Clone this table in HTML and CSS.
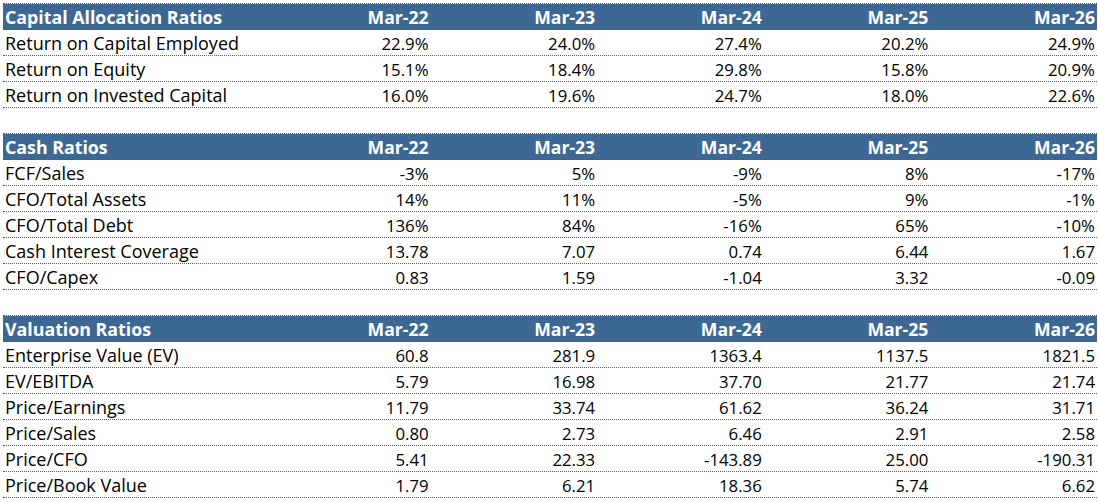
FILE: index.html
```html
<!DOCTYPE html>
<html lang="en">
<head>
<meta charset="utf-8">
<title>Ratios</title>
<link rel="stylesheet" href="styles.css">
</head>
<body>
<div class="sheet">
  <div class="row head"><div class="lbl">Capital Allocation Ratios</div><div>Mar-22</div><div>Mar-23</div><div>Mar-24</div><div>Mar-25</div><div>Mar-26</div></div>
  <div class="row"><div class="lbl">Return on Capital Employed</div><div>22.9%</div><div>24.0%</div><div>27.4%</div><div>20.2%</div><div>24.9%</div></div>
  <div class="row"><div class="lbl">Return on Equity</div><div>15.1%</div><div>18.4%</div><div>29.8%</div><div>15.8%</div><div>20.9%</div></div>
  <div class="row"><div class="lbl">Return on Invested Capital</div><div>16.0%</div><div>19.6%</div><div>24.7%</div><div>18.0%</div><div>22.6%</div></div>
  <div class="row blank"></div>
  <div class="row head"><div class="lbl">Cash Ratios</div><div>Mar-22</div><div>Mar-23</div><div>Mar-24</div><div>Mar-25</div><div>Mar-26</div></div>
  <div class="row"><div class="lbl">FCF/Sales</div><div>-3%</div><div>5%</div><div>-9%</div><div>8%</div><div>-17%</div></div>
  <div class="row"><div class="lbl">CFO/Total Assets</div><div>14%</div><div>11%</div><div>-5%</div><div>9%</div><div>-1%</div></div>
  <div class="row"><div class="lbl">CFO/Total Debt</div><div>136%</div><div>84%</div><div>-16%</div><div>65%</div><div>-10%</div></div>
  <div class="row"><div class="lbl">Cash Interest Coverage</div><div>13.78</div><div>7.07</div><div>0.74</div><div>6.44</div><div>1.67</div></div>
  <div class="row"><div class="lbl">CFO/Capex</div><div>0.83</div><div>1.59</div><div>-1.04</div><div>3.32</div><div>-0.09</div></div>
  <div class="row blank"></div>
  <div class="row head"><div class="lbl">Valuation Ratios</div><div>Mar-22</div><div>Mar-23</div><div>Mar-24</div><div>Mar-25</div><div>Mar-26</div></div>
  <div class="row"><div class="lbl">Enterprise Value (EV)</div><div>60.8</div><div>281.9</div><div>1363.4</div><div>1137.5</div><div>1821.5</div></div>
  <div class="row"><div class="lbl">EV/EBITDA</div><div>5.79</div><div>16.98</div><div>37.70</div><div>21.77</div><div>21.74</div></div>
  <div class="row"><div class="lbl">Price/Earnings</div><div>11.79</div><div>33.74</div><div>61.62</div><div>36.24</div><div>31.71</div></div>
  <div class="row"><div class="lbl">Price/Sales</div><div>0.80</div><div>2.73</div><div>6.46</div><div>2.91</div><div>2.58</div></div>
  <div class="row"><div class="lbl">Price/CFO</div><div>5.41</div><div>22.33</div><div>-143.89</div><div>25.00</div><div>-190.31</div></div>
  <div class="row"><div class="lbl">Price/Book Value</div><div>1.79</div><div>6.21</div><div>18.36</div><div>5.74</div><div>6.62</div></div>
</div>
</body>
</html>
```

FILE: styles.css
```css
html, body {
  margin: 0;
  padding: 0;
  background: #ffffff;
}
body {
  padding: 3px 1px 0 3px;
  font-family: "Open Sans", Lato, sans-serif;
  font-size: 16.8px;
  color: #000000;
}
.sheet {
  width: 1094px;
  border-top: 1px dotted #5a5a5a;
}
.row {
  display: grid;
  grid-template-columns: 261px repeat(5, 1fr);
  align-items: baseline;
  height: 26px;
  box-sizing: border-box;
  border-bottom: 1px dotted #5a5a5a;
}
.row > div {
  text-align: right;
  padding: 1px 2px 0 2px;
  line-height: 24px;
  white-space: nowrap;
}
.row > .lbl {
  text-align: left;
  font-size: 18px;
}
.row.head {
  background: #3c6893;
  color: #ffffff;
  font-weight: 700;
  font-size: 17.6px;
}
.row.head > .lbl {
  font-size: 17.8px;
}
.row.blank {
  border-bottom: 1px dotted #5a5a5a;
}
```
